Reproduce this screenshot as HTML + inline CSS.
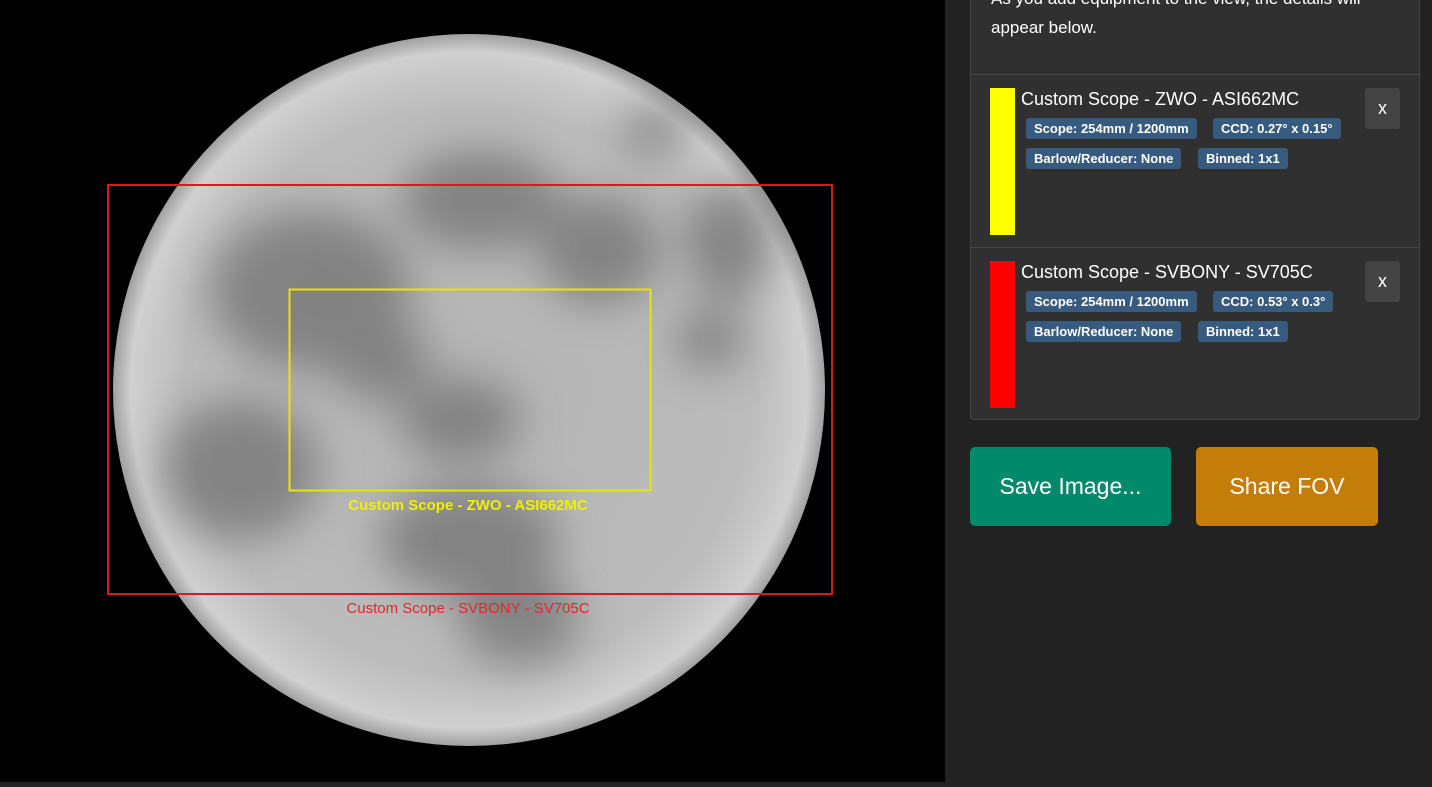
<!DOCTYPE html>
<html><head><style>
*{margin:0;padding:0;box-sizing:border-box}
body{width:1432px;height:782px;overflow:hidden;background:#222;font-family:"Liberation Sans",sans-serif;position:relative}
#left{position:absolute;left:0;top:0;width:945px;height:782px;background:#000}
#right{position:absolute;left:945px;top:0;width:487px;height:782px;background:#222;color:#fff}
.card{position:absolute;left:25px;top:-10px;width:450px;height:430px;background:#303030;border:1px solid #444;border-radius:4px}
.intro{position:absolute;left:20px;top:-7px;font-size:17px;line-height:29px;color:#fff;width:420px}
.sep{position:absolute;left:0;width:448px;height:1px;background:#474747}
.item{position:absolute;left:0;width:448px;height:172px}
.bar{position:absolute;left:19px;top:13px;width:25px;height:147px}
.title{position:absolute;left:50px;top:14px;font-size:18px}
.tag{position:absolute;height:21px;background:#375a7f;border-radius:3px;font-size:13px;font-weight:bold;line-height:21px;padding:0 8px;white-space:nowrap}
.x{position:absolute;left:394px;top:13px;width:35px;height:41px;background:#444;border-radius:3px;font-size:18px;text-align:center;line-height:41px}
.btn{position:absolute;top:447px;height:79px;border-radius:5px;font-size:23px;text-align:center;line-height:79px;color:#fff}
</style></head><body>
<div id="left">
<svg width="945" height="782">
<defs>
<radialGradient id="g" cx="50%" cy="50%" r="50%">
<stop offset="0" stop-color="#b4b4b4"/><stop offset="0.8" stop-color="#bcbcbc"/><stop offset="0.95" stop-color="#d0d0d0"/><stop offset="1" stop-color="#a0a0a0"/>
</radialGradient>
<filter id="b"><feGaussianBlur stdDeviation="22"/></filter>
<clipPath id="c"><circle cx="469" cy="390" r="356"/></clipPath>
</defs>
<circle cx="469" cy="390" r="356" fill="url(#g)"/>
<g clip-path="url(#c)" filter="url(#b)" fill="#5e5e5e" opacity="0.6">
<ellipse cx="310" cy="290" rx="100" ry="80"/>
<ellipse cx="480" cy="200" rx="80" ry="50"/>
<ellipse cx="600" cy="250" rx="60" ry="55"/>
<ellipse cx="730" cy="240" rx="45" ry="60"/>
<ellipse cx="655" cy="130" rx="35" ry="25"/>
<ellipse cx="240" cy="470" rx="80" ry="70"/>
<ellipse cx="460" cy="420" rx="60" ry="40"/>
<ellipse cx="470" cy="540" rx="90" ry="55"/>
<ellipse cx="520" cy="620" rx="60" ry="45"/>
<ellipse cx="380" cy="360" rx="50" ry="40"/>
<ellipse cx="710" cy="340" rx="35" ry="30"/>
</g>
<rect x="108" y="185" width="724" height="409" fill="none" stroke="#d41c1c" stroke-width="2"/>
<rect x="289.5" y="289.5" width="361" height="201" fill="none" stroke="#e6e600" stroke-width="2"/>
<text x="468" y="510" text-anchor="middle" font-family="Liberation Sans" font-weight="bold" font-size="15" fill="#f0f000">Custom Scope - ZWO - ASI662MC</text>
<text x="468" y="613" text-anchor="middle" font-family="Liberation Sans" font-size="15" fill="#e02828">Custom Scope - SVBONY - SV705C</text>
</svg>
</div>
<div id="right">
<div class="card">
<div class="intro">As you add equipment to the view, the details will appear below.</div>
<div class="sep" style="top:83px"></div>
<div class="item" style="top:84px">
<div class="bar" style="background:#ff0"></div>
<div class="title">Custom Scope - ZWO - ASI662MC</div>
<div class="tag" style="left:55px;top:43px">Scope: 254mm / 1200mm</div>
<div class="tag" style="left:242px;top:43px">CCD: 0.27° x 0.15°</div>
<div class="tag" style="left:55px;top:73px">Barlow/Reducer: None</div>
<div class="tag" style="left:227px;top:73px">Binned: 1x1</div>
<div class="x">x</div>
</div>
<div class="sep" style="top:256px"></div>
<div class="item" style="top:257px">
<div class="bar" style="background:#f00"></div>
<div class="title">Custom Scope - SVBONY - SV705C</div>
<div class="tag" style="left:55px;top:43px">Scope: 254mm / 1200mm</div>
<div class="tag" style="left:242px;top:43px">CCD: 0.53° x 0.3°</div>
<div class="tag" style="left:55px;top:73px">Barlow/Reducer: None</div>
<div class="tag" style="left:227px;top:73px">Binned: 1x1</div>
<div class="x">x</div>
</div>
</div>
<div class="btn" style="left:25px;width:201px;background:#00896a">Save Image...</div>
<div class="btn" style="left:251px;width:182px;background:#c57d0a">Share FOV</div>
</div>
</body></html>
